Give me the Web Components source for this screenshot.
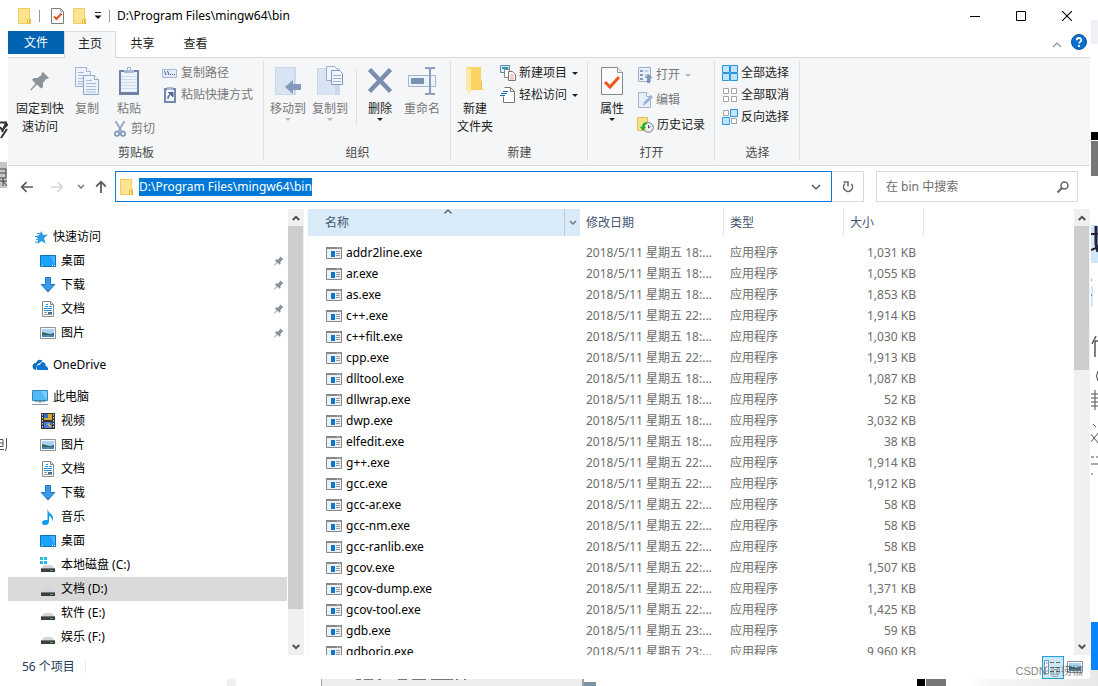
<!DOCTYPE html>
<html lang="zh-CN">
<head>
<meta charset="utf-8">
<title>D:\Program Files\mingw64\bin</title>
<style>
  html, body { margin: 0; height: 100%; overflow: hidden; }
  body { font: 12px/18px "Noto Sans", "Noto Sans CJK SC", sans-serif; color: #000; background: #fff; }
</style>
</head>
<body>
<explorer-desktop>
  <explorer-window>
    <title-bar slot="title">D:\Program Files\mingw64\bin</title-bar>
    <ribbon-tabs slot="tabs"></ribbon-tabs>
    <ribbon-panel slot="ribbon"></ribbon-panel>
    <address-bar slot="address" path="D:\Program Files\mingw64\bin" folder="bin"></address-bar>
    <nav-pane slot="nav"></nav-pane>
    <file-list slot="files"></file-list>
    <status-bar slot="status">56 个项目</status-bar>
  </explorer-window>
</explorer-desktop>

<script>
const define = (name, html, setup) => {
  const tpl = document.createElement('template');
  tpl.innerHTML = '<style>:host,*{box-sizing:border-box}button,input{font:inherit;color:inherit}button{background:none;border:0;padding:0;margin:0}[hidden]{display:none!important}</style>' + html;
  customElements.define(name, class extends HTMLElement {
    constructor() {
      super();
      this.attachShadow({ mode: 'open' }).append(tpl.content.cloneNode(true));
    }
    connectedCallback() {
      if (this.ready) return;
      this.ready = true;
      if (setup) setup.call(this, this.shadowRoot);
    }
  });
};

/* ---------- icons: [width, height, drawing] ---------- */
const page = (x, y, s) => `<g transform="translate(${x} ${y})"><path d="M.5.5h11l4 4v15H.5z" fill="#eef3fb" stroke="${s}"/><path d="M11.500.5v4h4" fill="#fff" stroke="${s}"/><path d="M3 5.500h6M3 8.500h10M3 11.500h10M3 14.500h10M3 17h10" stroke="#a9bcd9"/></g>`;
const drive = '<path d="M4 8h8l2.500 3.500h-13z" fill="#d3d5d8"/><path d="M1 11h14v4H1z" fill="#3b3e42"/><path d="M1 11h14v1H1z" fill="#77797c"/><path d="M10.500 13h2v1h-2z" fill="#4be04b"/>';
const pinShape = '<path d="M13 1l6 6-2 1-1 0-3 4 0 4-2 1.500-4-4L1 19.500 0 19l5.500-6.500L2 9l1.500-2h4l4-3V2z"/>';
const ICONS = {
  folder: [13, 16, '<path d="M0 0h12v10h1v6H0z" fill="#f3cd62"/><path d="M1 1h10v10h1v4H1z" fill="#fee391"/><path d="M9 15.500v-4h4v4z" fill="#e8b738"/><path d="M10.500 12v3" stroke="#fff0b8"/>'],
  check: [13, 16, '<path d="M.5.5h9l3 3v12H.5z" fill="#fafafa" stroke="#7d7d7d"/><path d="M9.500.5v3h3" fill="none" stroke="#aaa"/><path d="M3 8.500l2.500 2.500 5-5.500" fill="none" stroke="#e8501d" stroke-width="2"/>'],
  customize: [8, 8, '<path d="M1 .5h6" stroke="#222"/><path d="M.5 3.500h7L4 7z" fill="#111"/>'],
  min: [10, 10, '<path d="M0 5.500h10" stroke="#000"/>'],
  max: [10, 10, '<path d="M.5.5h9v9h-9z" fill="none" stroke="#000"/>'],
  close: [10, 10, '<path d="M0 0l10 10M10 0L0 10" stroke="#000" stroke-width="1.100"/>'],
  collapse: [10, 6, '<path d="M1 5l4-4 4 4" fill="none" stroke="#9a9a9a" stroke-width="1.400"/>'],
  sort: [8, 5, '<path d="M.5 4.500L4 1l3.500 3.500" fill="none" stroke="#555" stroke-width="1.200"/>'],
  help: [16, 16, '<circle cx="8" cy="8" r="7.500" fill="#0a6fd0" stroke="#08559f"/><path d="M5.700 6.200C5.700 3.300 10.300 3.300 10.300 6.100 10.300 7.800 8 7.900 8 9.600M8 11v2" fill="none" stroke="#fff" stroke-width="1.800"/>'],
  pinBig: [20, 20, `<g fill="#8c949b">${pinShape}</g>`],
  pin: [10, 10, `<g fill="#88929b" transform="scale(.5)">${pinShape}</g>`],
  copy: [24, 28, page(0, 0, '#9fb3d1') + page(8, 8, '#8fa5c8')],
  paste: [20, 28, '<path d="M0 3h20v25H0z" fill="#6f83a6"/><path d="M2 5h16v20H2z" fill="#edf3fb"/><path d="M2 9.500h16M2 12.500h16M2 15.500h16M2 18.500h16M2 21.500h16" stroke="#cfdbed"/><path d="M5 3h3V0h4v3h3v3H5z" fill="#a9b8d1"/><path d="M9 1h2v2H9z" fill="#fff"/>'],
  cut: [12, 16, '<path d="M1.500 0l6.500 11M10.500 0L4 11" stroke="#93a6c6" stroke-width="1.800"/><g fill="none" stroke="#7f93b5" stroke-width="1.600"><circle cx="3" cy="12.800" r="2.200"/><circle cx="9" cy="12.800" r="2.200"/></g>'],
  path: [16, 16, '<path d="M.5 4.500h14v8H.5z" fill="#e3ecf8" stroke="#a7b8d2"/><path d="M2.500 6l1.500 4M5.500 6L7 10" stroke="#445f91"/><path d="M8 9.500h1M10 9.500h1M12 9.500h1" stroke="#445f91"/>'],
  shortcut: [16, 16, '<path d="M2 1h12v15H2z" fill="#7689ab"/><path d="M4 3h8v11H4z" fill="#f2f6fc"/><path d="M5 0h6v3H5z" fill="#a9b8d1"/><path d="M6 12c-.5-3 .5-4 2.500-4.500M6.500 5.500H11V10z" fill="#4c6797" stroke="#4c6797"/>'],
  moveTo: [26, 30, '<path d="M0 1h21v28H0z" fill="#cbd8eb"/><path d="M1 2h18v26H1z" fill="#d9e4f3"/><path d="M10 21l8-7v4h8v6h-8v4z" fill="#8698bb"/>'],
  copyTo: [26, 30, '<path d="M0 2h23v27H0z" fill="#cbd8eb"/><path d="M1 3h17v26H1z" fill="#d9e4f3"/><g transform="translate(9 0)"><path d="M.5.5h8l3 3v11H.5z" fill="#f3f7fd" stroke="#98acce"/><g transform="translate(5 4)"><path d="M.5.5h8l3 3v11H.5z" fill="#f3f7fd" stroke="#8096bd"/><path d="M2 5.500h8M2 8.500h8M2 11.500h8" stroke="#9db0d0"/></g></g>'],
  del: [26, 26, '<path d="M2.500 1.500l21 22M23.500 1.500l-21 22" stroke="#7c8daf" stroke-width="4.500"/>'],
  rename: [28, 28, '<path d="M.5 8.500h27v11H.5z" fill="#edf3fb" stroke="#a4b5d1"/><path d="M3 11h13v6H3z" fill="#7b90b5"/><path d="M17 1h3q2 0 2 2v22q0 2-2 2h-3M27 1h-3q-2 0-2 2M22 25q0 2 2 2h3" fill="none" stroke="#8a9cbd" stroke-width="2"/>'],
  newFolder: [20, 28, '<path d="M1 0h15v22h3v1H1z" fill="#fcd66e"/><path d="M6 3L16 0v22h3v1H6z" fill="#fbd362"/><path d="M1 0l5 3v21.500L5 27l-4-4z" fill="#ffe9a8"/><path d="M16 14h1v8h-1z" fill="#edbd45"/>'],
  newItem: [16, 16, '<path d="M.5.5h9v7h-9z" fill="#d9f0fb" stroke="#4f8ba6"/><path d="M2 2h6v2H2z" fill="#3d8fb5"/><path d="M4.500 4.500h5v8h-5z" fill="#fff" stroke="#888"/><path d="M8.500 6.500h4l3 3v6h-7z" fill="#fff" stroke="#777"/><path d="M10 10h4M10 12h4M10 14h4" stroke="#e99aa6"/>'],
  easy: [16, 16, '<path d="M4.500.5h6l4 4v11h-11v-6" fill="#fff" stroke="#777"/><path d="M10.500.5v4h4" fill="none" stroke="#777"/><path d="M3 4.500h5M1 6.500h6M0 8.500h5" stroke="#1c6bb3"/>'],
  props: [22, 28, '<path d="M.5.5h16l5 5v22H.5z" fill="#fbfbfb" stroke="#878787"/><path d="M16.500.5v5h5" fill="#eee" stroke="#999"/><path d="M4 15l5 5 9-10" fill="none" stroke="#f0561d" stroke-width="3"/>'],
  open: [16, 16, '<path d="M1.500.5h12v14h-12z" fill="#eaf0f9" stroke="#9dafcd"/><path d="M3 3h3v2H3zM3 7h3v2H3zM3 11h3v2H3z" fill="#8297bc"/><path d="M7.500 4h4M7.500 8h4" stroke="#9dafcd"/><path d="M11.500 7l4 4h-2.500v5h-3v-5H7.500z" fill="#7f93b8"/>'],
  edit: [16, 16, '<path d="M1.500.5h8l4 4v11h-12z" fill="#e6eef9" stroke="#a4b5d1"/><path d="M9.500.5v4h4" fill="#fff" stroke="#a4b5d1"/><path d="M6 14l1-4 7-7 2 2-7 7z" fill="#9db0d0"/>'],
  history: [17, 16, '<path d="M.5.500h10v13H.5z" fill="#f8e08c" stroke="#e0bf54"/><circle cx="11.500" cy="10.500" r="4.800" fill="#f0f0f0" stroke="#777"/><path d="M11.500 8V11l2-1.500" stroke="#555" fill="none"/><path d="M9.500 5Q5 5.500 5 10l-2.500-.5L6 14l3-4-1.500 0Q7.500 7.500 10 7z" fill="#22b32a"/>'],
  selAll: [16, 16, '<g fill="#bfe4ff" stroke="#2a94dd"><path d="M.5.5h7v7h-7zM8.500.5h7v7h-7zM.5 8.500h7v7h-7zM8.500 8.500h7v7h-7z"/></g>'],
  selNone: [16, 16, '<g fill="#fff" stroke="#a3a3a3"><path d="M1.500 1.500h5v5h-5zM9.500 1.500h5v5h-5zM1.500 9.500h5v5h-5zM9.500 9.500h5v5h-5z"/></g>'],
  selInv: [16, 16, '<g fill="#fff" stroke="#a3a3a3"><path d="M1.500 1.500h5v5h-5zM9.500 9.500h5v5h-5z"/></g><g fill="#bfe4ff" stroke="#2a94dd"><path d="M8.500.5h7v7h-7zM.5 8.500h7v7h-7z"/></g>'],
  arrow: [6, 3, '<path d="M0 0h6L3 3z" fill="currentColor"/>'],
  back: [14, 12, '<path d="M13 6H2M6.500 1.200L1.700 6l4.800 4.800" fill="none" stroke="#5c5c5c" stroke-width="1.700"/>'],
  fwd: [14, 12, '<path d="M1 6h11M7.500 1.200L12.300 6l-4.800 4.800" fill="none" stroke="#d6d6d6" stroke-width="1.700"/>'],
  up: [14, 14, '<path d="M7 13V2M2.200 6.500L7 1.700l4.800 4.800" fill="none" stroke="#5c5c5c" stroke-width="1.800"/>'],
  chev: [8, 5, '<path d="M1 1l3 3 3-3" fill="none" stroke="#777" stroke-width="1.500"/>'],
  chevBig: [10, 6, '<path d="M1 1l4 4 4-4" fill="none" stroke="#444" stroke-width="1.200"/>'],
  refresh: [12, 12, '<path d="M3 2.500A4.500 4.500 0 1 0 9.500 3" fill="none" stroke="#6a6a6a" stroke-width="1.600"/><path d="M1.500 1h4.500v4.500" fill="none" stroke="#6a6a6a" stroke-width="1.600"/>'],
  search: [12, 12, '<circle cx="7.500" cy="4.500" r="3.500" fill="none" stroke="#666" stroke-width="1.500"/><path d="M5 7L.5 11.500" stroke="#666" stroke-width="2"/>'],
  star: [16, 16, '<path d="M9.500 2l1.500 4 5-.5-4 3.500 1.500 5.500L9.500 12l-4 3 .8-5L3.500 7l3.500-.8z" fill="#2b9be6"/><path d="M5 4.500h3M3 7.500h2M4 10.500h2M3 13h3" stroke="#2b9be6"/>'],
  desktop: [16, 16, '<path d="M.5 2.500h15v11H.5z" fill="#1ea1fb" stroke="#1073ba"/><path d="M2 12.500h1M12 12.500h1M14 12.500h1" stroke="#fff"/><path d="M10 3h5v9z" fill="#45b3ff"/>'],
  down: [16, 16, '<path d="M5.500.5h5v7h4.300L8 15 1.200 7.500h4.300z" fill="#3a97ea" stroke="#2177c9"/>'],
  doc: [16, 16, '<path d="M2.500.5h8l3 3v12h-11z" fill="#fff" stroke="#8b8b8b"/><path d="M10.500.5v3h3" fill="none" stroke="#8b8b8b"/><path d="M6 3.500h2M5 5.500h3M4 7.500h8M9 5.500h3M4 9.500h8" stroke="#1f8bd0"/><path d="M4 11.500h3M4 13.500h8" stroke="#999"/><path d="M8 11h4v2H8z" fill="#3d7396"/>'],
  picture: [16, 16, '<path d="M.5 2.500h15v11H.5z" fill="#fff" stroke="#929292"/><path d="M2 4h12v8H2z" fill="#a9d2f2"/><path d="M2 7l4 1 4 1 4-1v4H2z" fill="#2f6b66"/><path d="M2 10h12v2H2z" fill="#4d86b8"/>'],
  cloud: [16, 16, '<path d="M4 13A4 4 0 0 1 .5 9 3.500 3.500 0 0 1 4 6Q6 1 10.500 3.500L8 6Q4 7 4 13z" fill="#0f6cbd"/><path d="M5.500 13C2.500 9 7 7 8 8Q9 4 12 5.500 14 6.500 13.500 9 16.500 9.500 16 13z" fill="#0b74d1"/>'],
  pc: [16, 16, '<path d="M.5 1.500h15v10H.5z" fill="#52bbf5" stroke="#3a86b8"/><path d="M7 12h2v2H7z" fill="#9ab"/><path d="M3 12.500h10M0 15.500h16" stroke="#8ea0ad"/><path d="M9 2h6v9z" fill="#7dcffb"/>'],
  video: [16, 16, '<path d="M1 0h14v16H1z" fill="#333"/><path d="M4 1h8v6H4z" fill="#d8a52d"/><path d="M4 9h8v6H4z" fill="#3f7be0"/><path d="M4 1h4v4H4z" fill="#3467d0"/><path d="M6 11l3-1 1 2 2 2H9l-1-2z" fill="#e0b53a"/><path d="M2.500 1v14M13.500 1v14" stroke="#ddd" stroke-dasharray="1.500 1.500"/>'],
  music: [16, 16, '<path d="M7.500 0Q8 3 11 5q3.500 3 1 7.500Q12.500 8 9 7v6q-.5 3-4 3-3 0-3-2 0-3 4-3h1.500z" fill="#0e9af5"/>'],
  drive: [16, 16, drive],
  driveC: [16, 16, '<path d="M0 0h3v3H0zM4 0h3v3H4zM0 4h3v3H0zM4 4h3v3H4z" fill="#22b9e8"/>' + drive],
  exe: [16, 12, '<path d="M.5.5h15v11H.5z" fill="#f0f0f0" stroke="#83888c"/><path d="M0 0h16v2H0z" fill="#83888c"/><path d="M11 1h1M13 1h1" stroke="#ddd"/><path d="M5 4h4v6H5z" fill="#0b74d8"/><path d="M10 4.500h4M10 6.500h4M10 8.500h4" stroke="#999"/>'],
  details: [18, 14, '<path d="M.5.5h4v13h-4z" fill="#f5fbff" stroke="#7d97a5"/><path d="M2 3h1.500M2 11h1.500" stroke="#3d8fd0"/><path d="M2 7h1.500" stroke="#e44"/><path d="M6 2.500h4M12 2.500h4M6 7.500h4M12 7.500h4M6 11.500h4M12 11.500h4" stroke="#666"/>'],
  sbUp: [8, 6, '<path d="M.8 5L4 1.800 7.200 5" fill="none" stroke="#505050" stroke-width="2"/>'],
  sbDown: [8, 6, '<path d="M.8 1L4 4.200 7.200 1" fill="none" stroke="#505050" stroke-width="2"/>'],
};
define('ui-icon', '<style>:host{display:inline-block;flex:none}svg,span{display:block}</style><span></span>', function (r) {
  const [w, h, d] = ICONS[this.getAttribute('name')];
  r.querySelector('span').innerHTML = `<svg width="${w}" height="${h}" viewBox="0 0 ${w} ${h}" aria-hidden="true">${d}</svg>`;
});

/* ---------- desktop behind the window ---------- */
define('explorer-desktop', `
<style>
  :host { display: block; position: relative; height: 100vh; overflow: hidden; background: #fff; }
  .behind { position: absolute; overflow: hidden; }
  .window { position: relative; height: 100%; padding: 0 8px 7px; }
</style>
<div class="behind" style="left:0;top:162px;width:7px;height:26px;background:#c6c6c6"></div>
<div class="behind" style="right:0;top:20px;width:7px;height:24px;background:#f1f0f7"></div>
<div class="behind" style="right:0;top:132px;width:7px;height:8px;background:#000"></div>
<div class="behind" style="right:0;top:141px;width:7px;height:35px;background:#777"></div>
<div class="behind" style="right:0;top:225px;width:7px;height:38px;background:#cfe6fb"></div>
<div class="behind" style="right:5px;top:286px;width:2px;height:21px;background:#cfe6fb"></div>
<div class="behind" style="right:0;top:622px;width:7px;height:48px;background:#0a84ff"></div>
<div class="behind" style="right:0;bottom:0;width:130px;height:16px;background:linear-gradient(100deg,#fff,#f6f6f7 20%,#e8e8ea)"></div>
<div class="behind" style="left:227px;bottom:0;width:9px;height:7px;background:#f0f0f0"></div>
<div class="behind" style="left:321px;bottom:0;width:263px;height:7px;background:#ededed;border:solid #a0a0a0;border-width:0 2px 0 1px"></div>
<div class="behind" style="left:584px;bottom:0;width:12px;height:4px;background:#7b93a5"></div>
<div class="behind" style="left:917px;bottom:0;width:8px;height:7px;background:#000"></div>
<div class="behind" style="left:926px;bottom:0;width:20px;height:7px;background:#777"></div>
<svg class="behind" style="left:356px;bottom:5px" width="112" height="2"><path d="M0 .5h5M8 .5h9M22 .5h3M42 .5h9M56 .5h14M75 .5h22M100 .5h2M108 .5h2" stroke="#777"/></svg>
<svg class="behind" style="left:0;top:118px" width="8" height="70"><path d="M0 4.500h7M6 5L2 14M0 9l3 4M3 11l5-5M1 20l6-9" stroke="#333" stroke-width="2" fill="none"/><path d="M0 51h6v9H0M0 55h6M0 63h7M3 60v8M3 63l4 5" stroke="#444" fill="none"/></svg>
<svg class="behind" style="left:0;top:437px" width="8" height="17"><path d="M0 2.500h3v7H0M0 6h3M0 12.500h4M6.500 1v9l-1 4" stroke="#555" fill="none"/></svg>
<svg class="behind" style="right:0;top:222px" width="7" height="255"><path d="M0 12h7M0 28l5-2" stroke="#223" stroke-width="2"/><path d="M5 4v18l2 8" stroke="#223" stroke-width="3" fill="none"/><path d="M0 58h1M0 73h1" stroke="#246"/><path d="M5 114l-4 8M4 119v16M4 119h3" stroke="#555" stroke-width="1.500"/><path d="M7 149q-3 5 0 10" stroke="#444" fill="none"/><path d="M0 172h7M0 176h7M0 180h7M0 184h7M4 168v20" stroke="#555"/><path d="M2 202l3 3M0 212l7 9M7 211l-7 9M0 235h3M5 235h2M0 242h7M0 252h2" stroke="#555"/></svg>
<div class="window"><slot></slot></div>`);

define('explorer-window', `
<style>
  :host { display: flex; flex-direction: column; height: 100%; background: #fff; position: relative; }
  .main { flex: 1; min-height: 0; display: flex; }
  .nav { width: 300px; flex: none; display: flex; border-right: 1px solid #f5f5f5; }
  .files { flex: 1; min-width: 0; display: flex; }
  ::slotted([slot=nav]), ::slotted([slot=files]) { flex: 1; min-width: 0; }
</style>
<slot name="title"></slot><slot name="tabs"></slot><slot name="ribbon"></slot><slot name="address"></slot>
<div class="main"><div class="nav"><slot name="nav"></slot></div><div class="files"><slot name="files"></slot></div></div>
<slot name="status"></slot>`);

define('title-bar', `
<style>
  :host { display: flex; align-items: center; flex: none; height: 31px; padding-left: 10px; }
  i { width: 1px; height: 12px; background: #999; }
  .quick { display: flex; align-items: center; height: 31px; }
  .text { flex: 1; padding-left: 7px; }
  .quick button { display: flex; }
  .win { width: 46px; height: 31px; display: grid; place-items: center; }
</style>
<div class="quick"><ui-icon name="folder"></ui-icon><i style="margin:0 11px 0 8px"></i>
<button aria-label="属性"><ui-icon name="check"></ui-icon></button><button aria-label="新建文件夹" style="margin:0 8px 0 9px"><ui-icon name="folder"></ui-icon></button><button aria-label="自定义快速访问工具栏" style="margin-right:7px"><ui-icon name="customize"></ui-icon></button><i></i></div>
<span class="text"><slot></slot></span>
<button class="win" aria-label="最小化"><ui-icon name="min"></ui-icon></button><button class="win" aria-label="最大化"><ui-icon name="max"></ui-icon></button><button class="win" aria-label="关闭"><ui-icon name="close"></ui-icon></button>`);

define('ribbon-tabs', `
<style>
  :host { display: flex; flex: none; height: 27px; border-bottom: 1px solid #dadbdc; align-items: flex-start; color: #222; }
  button { height: 24px; width: 53px; padding-top: 1px; }
  .file { background: #0063b1; color: #fff; width: 56px; height: 23px; }
  .on { background: #f5f6f7; border: 1px solid #dadbdc; border-bottom: 0; height: 27px; width: 52px; margin-bottom: -1px; padding-bottom: 3px; }
  .right { margin-left: auto; display: flex; gap: 9px; align-items: center; height: 26px; padding-right: 3px; }
  .right button { width: auto; height: auto; padding: 0; }
</style>
<button class="file">文件</button><button class="on">主页</button><button>共享</button><button>查看</button>
<div class="right"><button aria-label="最小化功能区"><ui-icon name="collapse"></ui-icon></button><button aria-label="帮助"><ui-icon name="help"></ui-icon></button></div>`);

define('ribbon-button', `
<style>
  :host { display: block; flex: none; }
  button { display: flex; flex-direction: column; align-items: center; min-width: 42px; line-height: 18px; color: #222; white-space: nowrap; }
  .pic { height: 38px; display: grid; place-items: center; }
  .more { height: 3px; display: flex; }
  :host([disabled]) button { color: #787878; }
  :host([disabled]) .more { color: #b5b5b5; }
  :host([small]) button { flex-direction: row; gap: 3px; min-width: 0; height: 22px; }
  :host([small]) .pic { height: 22px; min-width: 16px; }
  :host([small]) .more { margin-left: 2px; }
</style>
<button><span class="pic"></span><span class="label"><slot></slot></span><span class="more"><ui-icon name="arrow"></ui-icon></span></button>`, function (r) {
  r.querySelector('.pic').innerHTML = `<ui-icon name="${this.getAttribute('icon')}"></ui-icon>`;
  r.querySelector('.more').hidden = !this.hasAttribute('menu');
  r.querySelector('button').disabled = this.hasAttribute('disabled');
});

define('ribbon-group', `
<style>
  :host { display: flex; flex-direction: column; position: relative; flex: none; height: 107px; padding-bottom: 3px; }
  :host::after { content: ""; position: absolute; right: 0; top: 3px; bottom: 4px; width: 1px; background: #e0e1e3; }
  .body { flex: 1; min-height: 0; display: flex; align-items: flex-start; padding: 4px 0 0 3px; }
  .label { text-align: center; color: #4a4a4a; }
</style>
<div class="body"><slot></slot></div><div class="label"></div>`, function (r) {
  r.querySelector('.label').textContent = this.getAttribute('label');
});

define('ribbon-panel', `
<style>
  :host { display: flex; flex: none; background: #f5f6f7; border-bottom: 1px solid #dadbdc; height: 108px; overflow: hidden; }
  .col { display: flex; flex-direction: column; padding-left: 4px; }
  .loose { gap: 3px; padding-top: 2px; }
  .line { width: 1px; height: 55px; margin: 7px 2px 0 5px; background: #e0e1e3; }
</style>
<ribbon-group label="剪贴板" style="width:256px">
  <ribbon-button icon="pinBig" style="padding-left:5px">固定到快<br>速访问</ribbon-button>
  <ribbon-button icon="copy" disabled style="padding-left:2px">复制</ribbon-button>
  <div class="col" style="padding:0;width:50px"><ribbon-button icon="paste" disabled>粘贴</ribbon-button><ribbon-button small icon="cut" disabled style="padding-left:4px">剪切</ribbon-button></div>
  <div class="col"><ribbon-button small icon="path" disabled>复制路径</ribbon-button><ribbon-button small icon="shortcut" disabled>粘贴快捷方式</ribbon-button></div>
</ribbon-group>
<ribbon-group label="组织" style="width:187px">
  <ribbon-button icon="moveTo" disabled menu>移动到</ribbon-button><ribbon-button icon="copyTo" disabled menu>复制到</ribbon-button>
  <div class="line"></div>
  <ribbon-button icon="del" menu>删除</ribbon-button><ribbon-button icon="rename" disabled>重命名</ribbon-button>
</ribbon-group>
<ribbon-group label="新建" style="width:137px">
  <ribbon-button icon="newFolder">新建<br>文件夹</ribbon-button>
  <div class="col"><ribbon-button small icon="newItem" menu>新建项目</ribbon-button><ribbon-button small icon="easy" menu>轻松访问</ribbon-button></div>
</ribbon-group>
<ribbon-group label="打开" style="width:127px">
  <ribbon-button icon="props" menu>属性</ribbon-button>
  <div class="col loose"><ribbon-button small icon="open" disabled menu>打开</ribbon-button><ribbon-button small icon="edit" disabled>编辑</ribbon-button><ribbon-button small icon="history">历史记录</ribbon-button></div>
</ribbon-group>
<ribbon-group label="选择" style="width:85px">
  <div class="col"><ribbon-button small icon="selAll">全部选择</ribbon-button><ribbon-button small icon="selNone">全部取消</ribbon-button><ribbon-button small icon="selInv">反向选择</ribbon-button></div>
</ribbon-group>`);

define('address-bar', `
<style>
  :host { display: flex; flex: none; align-items: center; padding: 5px 12px 7px; height: 43px; }
  button { display: flex; flex: none; }
  .path { flex: 1; min-width: 0; height: 31px; border: 1px solid #0a78d4; display: flex; align-items: center; padding: 0 10px 0 4px; }
  input { flex: 1; min-width: 0; border: 0; outline: 0; padding: 0; background: none; height: 18px; line-height: 18px; }
  .path input { margin-left: 6px; }
  input::selection { background: #0078d7; color: #fff; }
  .refresh { width: 32px; height: 31px; border: 1px solid #d9d9d9; border-left: 0; align-items: center; justify-content: center; }
  .search { margin-left: 12px; width: 202px; height: 31px; border: 1px solid #d9d9d9; display: flex; align-items: center; padding: 0 8px 0 9px; }
  .search input::placeholder { color: #6d6d6d; opacity: 1; }
</style>
<button aria-label="返回"><ui-icon name="back"></ui-icon></button><button aria-label="前进" style="margin-left:16px" disabled><ui-icon name="fwd"></ui-icon></button>
<button aria-label="最近浏览的位置" style="margin-left:13px"><ui-icon name="chev"></ui-icon></button><button aria-label="上移" style="margin:0 7px 0 9px"><ui-icon name="up"></ui-icon></button>
<div class="path"><ui-icon name="folder"></ui-icon><input id="p" aria-label="地址" spellcheck="false"><button aria-label="以前的位置"><ui-icon name="chevBig"></ui-icon></button></div>
<button class="refresh" aria-label="刷新"><ui-icon name="refresh"></ui-icon></button>
<div class="search"><input id="s" aria-label="搜索"><button aria-label="搜索"><ui-icon name="search"></ui-icon></button></div>`, function (r) {
  const p = r.getElementById('p');
  p.value = this.getAttribute('path');
  r.getElementById('s').placeholder = `在 ${this.getAttribute('folder')} 中搜索`;
  p.focus();
  p.select();
});

define('scroll-bar', `
<style>
  :host { display: flex; flex-direction: column; width: 16px; flex: none; background: #f0f0f0; }
  button { height: 17px; display: grid; place-items: center; flex: none; }
  .track { flex: 1; padding-right: 1px; }
  .thumb { background: #cdcdcd; }
</style>
<button aria-label="向上滚动"><ui-icon name="sbUp"></ui-icon></button><div class="track"><div class="thumb"></div></div><button aria-label="向下滚动"><ui-icon name="sbDown"></ui-icon></button>`, function (r) {
  r.querySelector('.thumb').style.height = this.getAttribute('thumb');
});

define('nav-item', `
<style>
  :host { display: block; }
  a { display: flex; align-items: center; height: 24px; padding: 0 3px 0 24px; color: #000; text-decoration: none; }
  .text { flex: 1; padding-left: 5px; }
  .pic { display: flex; }
  :host([child]) a { padding-left: 32px; }
  :host([selected]) a { background: #d9d9d9; }
</style>
<a href="#"><span class="pic"></span><span class="text"><slot></slot></span><ui-icon class="pin" name="pin"></ui-icon></a>`, function (r) {
  r.querySelector('.pic').innerHTML = `<ui-icon name="${this.getAttribute('icon')}"></ui-icon>`;
  r.querySelector('.pin').hidden = !this.hasAttribute('pinned');
});

define('nav-pane', `
<style>
  :host { display: flex; }
  nav { flex: 1; padding: 16px 1px 0 0; overflow: hidden; }
  .gap { margin-top: 8px; }
  scroll-bar { margin-right: 3px; }
</style>
<nav aria-label="导航窗格">
<nav-item icon="star">快速访问</nav-item>
<nav-item child pinned icon="desktop">桌面</nav-item>
<nav-item child pinned icon="down">下载</nav-item>
<nav-item child pinned icon="doc">文档</nav-item>
<nav-item child pinned icon="picture">图片</nav-item>
<nav-item class="gap" icon="cloud">OneDrive</nav-item>
<nav-item class="gap" icon="pc">此电脑</nav-item>
<nav-item child icon="video">视频</nav-item>
<nav-item child icon="picture">图片</nav-item>
<nav-item child icon="doc">文档</nav-item>
<nav-item child icon="down">下载</nav-item>
<nav-item child icon="music">音乐</nav-item>
<nav-item child icon="desktop">桌面</nav-item>
<nav-item child icon="driveC">本地磁盘 (C:)</nav-item>
<nav-item child selected icon="drive">文档 (D:)</nav-item>
<nav-item child icon="drive">软件 (E:)</nav-item>
<nav-item child icon="drive">娱乐 (F:)</nav-item>
</nav>
<scroll-bar thumb="93%"></scroll-bar>`);

const FILES = [
  ['addr2line.exe', 18, '1,031'], ['ar.exe', 18, '1,055'], ['as.exe', 18, '1,853'], ['c++.exe', 22, '1,914'],
  ['c++filt.exe', 18, '1,030'], ['cpp.exe', 22, '1,913'], ['dlltool.exe', 18, '1,087'], ['dllwrap.exe', 18, '52'],
  ['dwp.exe', 18, '3,032'], ['elfedit.exe', 18, '38'], ['g++.exe', 22, '1,914'], ['gcc.exe', 22, '1,912'],
  ['gcc-ar.exe', 22, '58'], ['gcc-nm.exe', 22, '58'], ['gcc-ranlib.exe', 22, '58'], ['gcov.exe', 22, '1,507'],
  ['gcov-dump.exe', 22, '1,371'], ['gcov-tool.exe', 22, '1,425'], ['gdb.exe', 23, '59'], ['gdborig.exe', 23, '9,960'],
];
define('file-list', `
<style>
  :host { display: flex; }
  .view { flex: 1; overflow: hidden; }
  table { border-collapse: separate; border-spacing: 0; table-layout: fixed; width: 616px; }
  th { height: 27px; padding: 0 6px; font-weight: 400; text-align: left; color: #44546f; border-right: 1px solid #e5e5e5; }
  th.name { background: #d9ebf9; padding: 0 0 0 17px; border: 0; position: relative; }
  .head { display: flex; justify-content: space-between; align-items: center; height: 27px; }
  .drop { width: 16px; height: 27px; display: grid; place-items: center; border-left: 1px solid #b8ccdc; }
  .sort { position: absolute; left: 50%; top: 0; }
  tbody::before { content: ""; display: block; height: 6px; }
  td { height: 21px; padding: 0 6px; color: #6d6d6d; white-space: nowrap; overflow: hidden; line-height: 18px; }
  td:first-child { padding-left: 18px; color: #000; }
  td:last-child { text-align: right; padding-right: 8px; }
  .file { display: flex; align-items: center; gap: 4px; }
</style>
<div class="view"><table>
<colgroup><col style="width:272px"><col style="width:144px"><col style="width:120px"><col style="width:80px"></colgroup>
<thead><tr><th class="name"><div class="head"><span>名称</span><ui-icon class="sort" name="sort"></ui-icon><button class="drop" aria-label="筛选"><ui-icon name="chev"></ui-icon></button></div></th><th>修改日期</th><th>类型</th><th>大小</th></tr></thead>
<tbody></tbody></table></div>
<scroll-bar thumb="35%"></scroll-bar>`, function (r) {
  r.querySelector('tbody').innerHTML = FILES.map(([n, h, s]) =>
    `<tr><td><div class="file"><ui-icon name="exe"></ui-icon><span>${n}</span></div></td><td>2018/5/11 星期五 ${h}:...</td><td>应用程序</td><td>${s} KB</td></tr>`).join('');
});

define('status-bar', `
<style>
  :host { display: flex; flex: none; align-items: center; height: 24px; padding: 0 7px 0 14px; color: #1e395b; }
  .count { padding-right: 10px; border-right: 1px solid #ececec; line-height: 12px; }
  .views { margin-left: auto; display: flex; align-items: center; gap: 3px; }
  button { display: grid; place-items: center; }
  .on { width: 22px; height: 23px; background: #cce8f6; border: 1px solid #26a0da; }
  .mark { position: absolute; right: 7px; bottom: -1px; color: rgba(90,90,90,.75); font-size: 11px; font-family: "Liberation Sans", "Noto Sans CJK SC", sans-serif; }
</style>
<span class="count"><slot></slot></span>
<div class="views"><button class="on" aria-label="详细信息"><ui-icon name="details"></ui-icon></button><button aria-label="大图标"><ui-icon name="picture"></ui-icon></button></div>
<span class="mark">CSDN @捞椒</span>`);
</script>
</body>
</html>
